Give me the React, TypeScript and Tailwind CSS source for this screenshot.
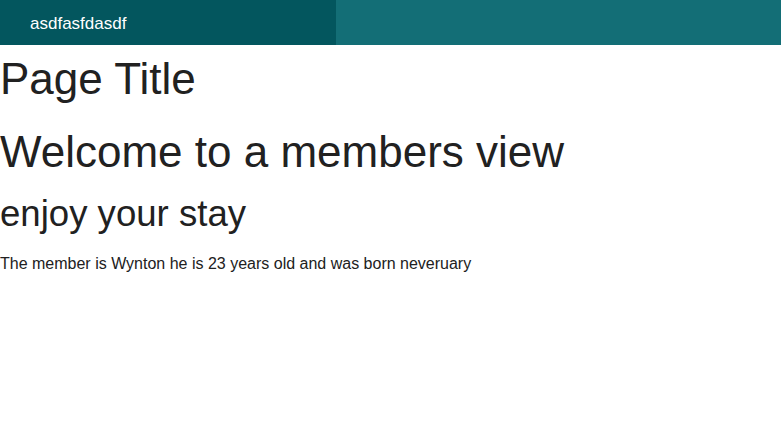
export default function App() {
  return (
    <div className="min-h-screen w-full bg-white text-[#212121] font-['Liberation_Sans',Arial,sans-serif]">
      <header className="flex h-[45px] w-full bg-[#136e76]">
        <div className="flex h-full w-[336px] items-center bg-[#03565e] pl-[30px] pt-[1px]">
          <span className="text-[17px] leading-none text-white">asdfasfdasdf</span>
        </div>
      </header>

      <main>
        <h1 className="mt-[12px] text-[44px] leading-none">Page Title</h1>
        <h2 className="mt-[29px] text-[44px] leading-none">Welcome to a members view</h2>
        <h3 className="mt-[22px] text-[36.6px] leading-none">enjoy your stay</h3>
        <p className="mt-[23px] text-[16px] leading-none">
          The member is Wynton he is 23 years old and was born neveruary
        </p>
      </main>
    </div>
  );
}
